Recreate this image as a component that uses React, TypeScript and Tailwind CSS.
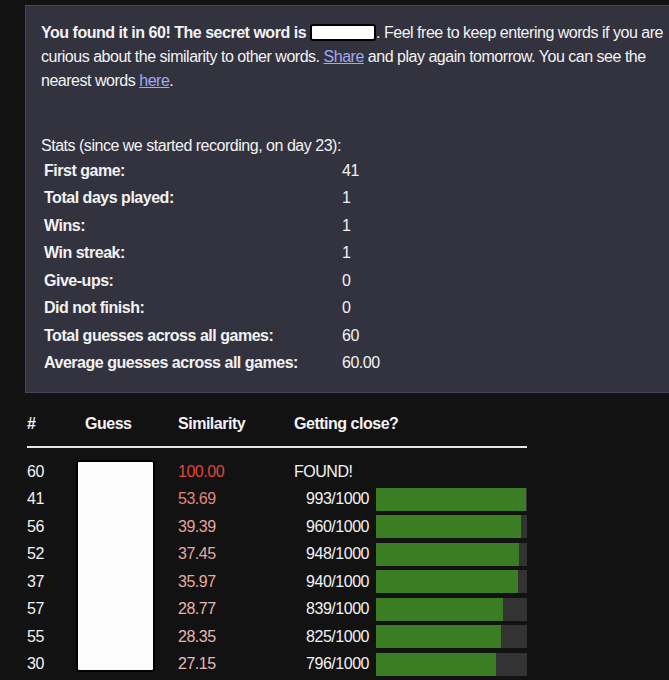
import React from 'react'

const stats: [string, string][] = [
  ['First game:', '41'],
  ['Total days played:', '1'],
  ['Wins:', '1'],
  ['Win streak:', '1'],
  ['Give-ups:', '0'],
  ['Did not finish:', '0'],
  ['Total guesses across all games:', '60'],
  ['Average guesses across all games:', '60.00'],
]

type Guess = { n: number; sim: string; color: string; rank?: number }

const guesses: Guess[] = [
  { n: 60, sim: '100.00', color: 'text-[#e0473c]' },
  { n: 41, sim: '53.69', color: 'text-[#e0877e]', rank: 993 },
  { n: 56, sim: '39.39', color: 'text-[#e3a29b]', rank: 960 },
  { n: 52, sim: '37.45', color: 'text-[#e3a7a0]', rank: 948 },
  { n: 37, sim: '35.97', color: 'text-[#e3aaa3]', rank: 940 },
  { n: 57, sim: '28.77', color: 'text-[#e4b6b0]', rank: 839 },
  { n: 55, sim: '28.35', color: 'text-[#e4b7b1]', rank: 825 },
  { n: 30, sim: '27.15', color: 'text-[#e4bab4]', rank: 796 },
  { n: 44, sim: '26.90', color: 'text-[#e4bab4]', rank: 780 },
]

export default function App() {
  return (
    <div
      className="h-[680px] w-[669px] overflow-hidden bg-[#121212] text-[16px] tracking-[-0.48px] text-[#f2f2f2]"
      style={{ fontFamily: '"Liberation Sans", Arial, sans-serif' }}
    >
      <div className="ml-[25px] mt-[5px] w-[700px] border border-[#45445a] bg-[#33323f] pb-[15px] pl-[15px] pt-[15px]">
        <p className="w-[630px] leading-[24px]">
          <b>You found it in 60! The secret word is </b>
          <span className="inline-block h-[17px] w-[66px] translate-y-[3px] rounded-[3px] border-2 border-black bg-white align-baseline" />
          . Feel free to keep entering words if you are curious about the similarity to other words.{' '}
          <a className="text-[#a3a8f0] underline">Share</a> and play again tomorrow. You can see the nearest words{' '}
          <a className="text-[#a3a8f0] underline">here</a>.
        </p>
        <div className="mt-[41px] leading-[24px]">Stats (since we started recording, on day 23):</div>
        <div className="-mt-[1px] pl-[3px]">
          {stats.map(([label, value]) => (
            <div key={label} className="flex h-[27.5px] items-center">
              <span className="w-[298px] font-bold">{label}</span>
              <span>{value}</span>
            </div>
          ))}
        </div>
      </div>

      <div className="relative ml-[27px] mt-[17px] w-[500px]">
        <div className="flex h-[38px] items-start border-b-2 border-[#e6e6e6] pt-[2px] font-bold leading-[24px]">
          <span className="w-[58px]">#</span>
          <span className="w-[93px]">Guess</span>
          <span className="w-[116px]">Similarity</span>
          <span>Getting close?</span>
        </div>
        <div className="pt-[10px]">
          {guesses.map((g) => (
            <div key={g.n} className="flex h-[27.5px] items-center">
              <span className="w-[151px]">{g.n}</span>
              <span className={`w-[116px] ${g.color}`}>{g.sim}</span>
              {g.rank === undefined ? (
                <span>FOUND!</span>
              ) : (
                <>
                  <span className="w-[75px] text-right">{g.rank}/1000</span>
                  <div className="ml-[7px] flex h-[23px] w-[151px] bg-[#333333]">
                    <div className="h-full bg-[#3b7d23]" style={{ width: `${(g.rank / 1000) * 100}%` }} />
                  </div>
                </>
              )}
            </div>
          ))}
        </div>
        <div className="absolute left-[49px] top-[50px] h-[212px] w-[79px] rounded-[3px] border-2 border-black bg-[#fdfdfd]" />
      </div>
    </div>
  )
}
